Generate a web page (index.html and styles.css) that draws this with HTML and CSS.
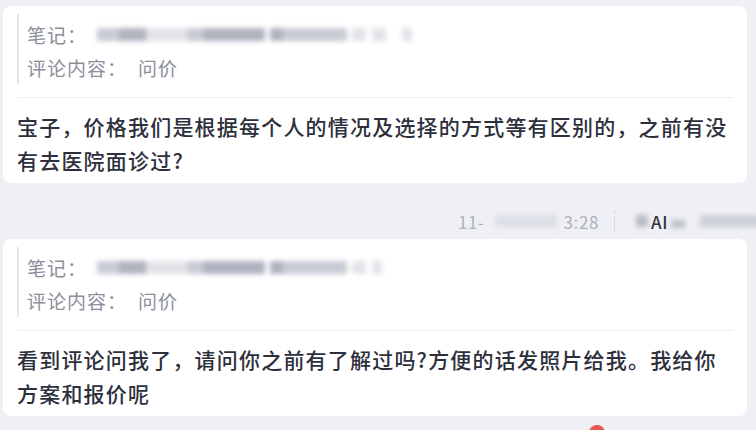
FILE: index.html
```html
<!DOCTYPE html>
<html lang="zh-CN">
<head>
    <meta charset="UTF-8">
    <meta name="viewport" content="width=device-width, initial-scale=1.0">
    <title>评论回复</title>
    <link rel="stylesheet" href="styles.css">
</head>
<body>

<div class="chat">
    <div class="card">
        <div class="quote">
            <div class="qline">
                <span class="label">笔记：</span>
                <span class="smudge">
                    <i class="s-mid" style="width: 22px"></i>
                    <i class="s-dark" style="width: 27px"></i>
                    <i class="s-light" style="width: 41px"></i>
                    <i class="s-mid" style="width: 16px"></i>
                    <i class="s-dark" style="width: 42px"></i>
                    <i class="s-dark" style="width: 20px"></i>
                    <i class="s-gap" style="width: 5px"></i>
                    <i class="s-dark" style="width: 13px"></i>
                    <i class="s-mid" style="width: 64px"></i>
                    <i class="s-gap" style="width: 5px"></i>
                    <i class="s-light" style="width: 14px"></i>
                    <i class="s-gap" style="width: 6px"></i>
                    <i class="s-light" style="width: 14px"></i>
                    <i class="s-gap" style="width: 16px"></i>
                    <i class="s-light" style="width: 10px"></i>
                </span>
            </div>
            <div class="qline">
                <span class="label">评论内容：</span><span class="label value">问价</span>
            </div>
        </div>
        <div class="divider"></div>
        <p class="msg">宝子，价格我们是根据每个人的情况及选择的方式等有区别的，之前有没有去医院面诊过?</p>
    </div>

    <div class="meta">
        <span class="date">11-</span>
        <span class="smudge faint date-blur"></span>
        <span class="time">3:28</span>
        <span class="vbar"></span>
        <span class="smudge tag-blur"></span>
        <span class="ai">AI</span>
        <span class="smudge name-blur"></span>
        <span class="smudge rest-blur"></span>
    </div>

    <div class="card">
        <div class="quote">
            <div class="qline">
                <span class="label">笔记：</span>
                <span class="smudge">
                    <i class="s-mid" style="width: 22px"></i>
                    <i class="s-dark" style="width: 27px"></i>
                    <i class="s-light" style="width: 41px"></i>
                    <i class="s-mid" style="width: 16px"></i>
                    <i class="s-dark" style="width: 42px"></i>
                    <i class="s-dark" style="width: 20px"></i>
                    <i class="s-gap" style="width: 5px"></i>
                    <i class="s-dark" style="width: 13px"></i>
                    <i class="s-mid" style="width: 64px"></i>
                    <i class="s-gap" style="width: 5px"></i>
                    <i class="s-light" style="width: 14px"></i>
                    <i class="s-gap" style="width: 6px"></i>
                    <i class="s-light" style="width: 10px"></i>
                </span>
            </div>
            <div class="qline">
                <span class="label">评论内容：</span><span class="label value">问价</span>
            </div>
        </div>
        <div class="divider"></div>
        <p class="msg">看到评论问我了，请问你之前有了解过吗?方便的话发照片给我。我给你方案和报价呢</p>
    </div>

    <div class="status">
        <span class="dot"></span>
    </div>
</div>

</body>
</html>
```

FILE: styles.css
```css
/* chat log */
body {
    margin: 0;
    background-color: #eff0f5;
    font-family: "Noto Sans CJK SC", "Noto Sans", sans-serif;
    overflow: hidden;
}
.chat {
    padding: 6px 0 0 3px;
}
.card {
    width: 744px;
    box-sizing: border-box;
    background-color: #fff;
    border-radius: 8px;
    padding: 8px 14px 6px 14px;
}
.quote {
    border-left: 2px solid #e4e6eb;
    padding: 4px 0 0 8px;
    height: 70px;
    box-sizing: border-box;
}
.qline {
    display: flex;
    align-items: center;
    height: 33px;
}
.label {
    font-size: 19px;
    letter-spacing: 1px;
    color: #8c8f9b;
    white-space: nowrap;
}
.value {
    margin-left: 11px;
}
.smudge {
    display: inline-flex;
    align-items: center;
    height: 13px;
    margin-left: 10px;
    filter: blur(2.5px);
}
.smudge i {
    display: block;
    height: 13px;
}
.s-dark {
    background-color: #b0b2bf;
}
.s-mid {
    background-color: #c9cbd5;
}
.s-light {
    background-color: #e2e3e9;
}
.s-gap {
    background-color: transparent;
}
.divider {
    height: 1px;
    background-color: #eceef2;
    margin-top: 13px;
}
.msg {
    margin: 11px 0 0 0;
    font-size: 21px;
    font-weight: 500;
    letter-spacing: 1.2px;
    line-height: 34px;
    color: #2d303c;
}
.meta {
    display: flex;
    align-items: center;
    height: 20px;
    margin: 28px 0 8px 0;
    padding-left: 455px;
    font-size: 17px;
    color: #aeb1bd;
    letter-spacing: 0.6px;
    white-space: nowrap;
}
.meta .smudge {
    flex: none;
    margin-left: 0;
    background-color: #c8cad4;
    height: 12px;
}
.meta .faint {
    background-color: #dddfe6;
}
.meta .date-blur {
    width: 62px;
    margin-left: 10px;
}
.time {
    margin-left: 7px;
}
.vbar {
    width: 1px;
    height: 20px;
    margin-left: 15px;
    border-left: 1px dotted #c9cbd4;
}
.meta .tag-blur {
    width: 12px;
    margin-left: 21px;
    background-color: #b9bbc6;
}
.ai {
    margin-left: 3px;
    color: #2f3240;
    font-weight: 500;
}
.meta .name-blur {
    width: 14px;
    margin-left: 3px;
    margin-top: 6px;
    height: 8px;
    background-color: #bfc1cb;
}
.meta .rest-blur {
    width: 60px;
    margin-left: 15px;
    background-color: #cdcfd8;
}
.status {
    display: flex;
    padding-left: 586px;
    margin-top: 9px;
}
.dot {
    width: 16px;
    height: 16px;
    border-radius: 50%;
    background-color: #e8564d;
}
```
